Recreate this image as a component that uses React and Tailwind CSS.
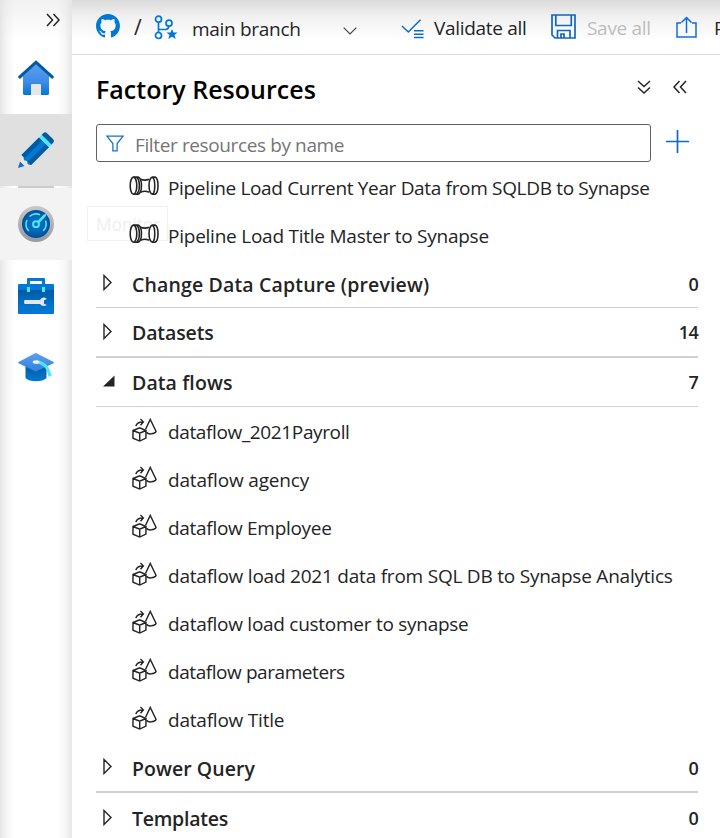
import React from "react";

function Home() {
  return (
    <svg width="36" height="36" viewBox="0 0 36 36">
      <defs>
        <linearGradient id="house" x1="0" y1="0" x2="0" y2="1">
          <stop offset="0" stopColor="#5ea0ef" />
          <stop offset="0.6" stopColor="#3c8be6" />
          <stop offset="1" stopColor="#0078d4" />
        </linearGradient>
      </defs>
      <path d="M18 3.5 5 16v17.5a1.5 1.5 0 0 0 1.500 1.500h23a1.500 1.500 0 0 0 1.500-1.500V16Z" fill="url(#house)" />
      <path d="M14 24h8a1 1 0 0 1 1 1v10H13V25a1 1 0 0 1 1-1Z" fill="#e6e6e6" />
      <path d="M18 0.300 0.300 16.300a1 1 0 0 0 0 1.200l1 .9a1 1 0 0 0 1.200 0L18 4.300l15.500 14.100a1 1 0 0 0 1.200 0l1-.9a1 1 0 0 0 0-1.200Z" fill="#005ba1" />
    </svg>
  );
}

function Pencil() {
  return (
    <svg width="36" height="36" viewBox="0 0 36 36">
      <path d="M0 36 3.500 23 13 33Z" fill="#e6e6e6" />
      <path d="M0 36 2 29.500 6.500 34Z" fill="#0f6fc6" />
      <path d="M3.500 23 21 5.500 31 15 13 33 9.700 32.300 9 29 6 28.300 5.500 24.500Z" fill="#0078d4" />
      <path d="M3.500 23 21 5.500l3.200 3L6.500 26Z" fill="#005ba1" />
      <path d="M9.800 29.800 27.800 12 31 15 13 33Z" fill="#005ba1" />
      <path d="m21 5.500 2.700-2.700L34 12.300 31 15.300Z" fill="#50e6ff" />
      <path d="m23.700 2.800 1.800-1.800Q27-.3 28.500.8L35 7q1.600 1.500.4 3.500L33.500 12.600Z" fill="#005ba1" />
    </svg>
  );
}

function Gauge() {
  return (
    <svg width="36" height="36" viewBox="0 0 36 36">
      <defs>
        <radialGradient id="dial">
          <stop offset="0" stopColor="#0078d4" />
          <stop offset="0.5" stopColor="#0669bc" />
          <stop offset="1" stopColor="#005099" />
        </radialGradient>
        <linearGradient id="rim" x1="0" y1="0" x2="0" y2="1">
          <stop offset="0" stopColor="#c9c9cc" />
          <stop offset="1" stopColor="#99999c" />
        </linearGradient>
      </defs>
      <circle cx="18" cy="18" r="18" fill="url(#rim)" />
      <circle cx="18" cy="18" r="14" fill="url(#dial)" />
      <g fill="none" stroke="#50e6ff" strokeWidth="1.600">
        <path d="M10.800 25A10 10 0 0 1 9 14" />
        <path d="M11.500 10.500A10 10 0 0 1 22 8.800" />
        <path d="M27.500 14.500A10 10 0 0 1 25.200 25" />
        <circle cx="18" cy="18.200" r="2.900" strokeWidth="2" />
      </g>
      <path d="m19.300 15.300 6.500-6.800 2-.5.500 1.800-7 7.200Z" fill="#50e6ff" />
    </svg>
  );
}

function Toolbox() {
  return (
    <svg width="36" height="36" viewBox="0 0 36 36">
      <defs>
        <linearGradient id="box" x1="0" y1="0" x2="0" y2="1">
          <stop offset="0" stopColor="#005ba1" />
          <stop offset="0.700" stopColor="#0074d0" />
          <stop offset="1" stopColor="#0078d4" />
        </linearGradient>
      </defs>
      <path d="M9 6V1q0-1 1-1h16q1 0 1 1v5h-3V3H12v3Z" fill="#0078d4" />
      <path d="M0 7q0-1 1-1h34q1 0 1 1v6H0Z" fill="#0078d4" />
      <path d="M0 12h36v23q0 1-1 1H1q-1 0-1-1Z" fill="url(#box)" />
      <path d="M9 9h3v5H9zM24 9h3v5h-3z" fill="#50e6ff" />
      <path d="M6.500 22H22q1.500-3 4.500-2.400L29 21l-3 1.200v3.600L29 27q-4.500 2.300-7-1H6.500q-1-2 0-4Z" fill="#e6e6e6" />
    </svg>
  );
}

function Cap() {
  return (
    <svg width="36" height="30" viewBox="0 0 36 30">
      <defs>
        <linearGradient id="board" x1="0" y1="0" x2="0" y2="1">
          <stop offset="0" stopColor="#5ea0ef" />
          <stop offset="1" stopColor="#2f80dc" />
        </linearGradient>
        <linearGradient id="base" x1="0" y1="0" x2="0" y2="1">
          <stop offset="0" stopColor="#005ba1" />
          <stop offset="1" stopColor="#0078d4" />
        </linearGradient>
      </defs>
      <path d="M7.500 11h21v14c-4 4.300-17 4.300-21 0Z" fill="url(#base)" />
      <path d="M17 .2.500 9q-.8.600 0 1.200L17 18.300q.8.400 1.600 0l17-8.100q.8-.6 0-1.200L18.600.2q-.8-.4-1.600 0Z" fill="url(#board)" />
      <path d="M18 8.500q12 2 13.500 13.500l1.800-.4" fill="none" stroke="#50e6ff" strokeWidth="3" />
      <ellipse cx="18" cy="9" rx="3.300" ry="1.800" fill="#f2f2f2" />
    </svg>
  );
}

function Chevrons({ className }) {
  return (
    <svg width="14" height="14" viewBox="0 0 14 14" className={className} fill="none" stroke="#242424" strokeWidth="1.500">
      <path d="M1 1 6.500 7 1 13M7.500 1 13 7 7.500 13" />
    </svg>
  );
}

function GitHub() {
  return (
    <svg width="24" height="24" viewBox="0 0 16 16" fill="#0078d4" className="mb-0.5 shrink-0">
      <path d="M8 0C3.580 0 0 3.580 0 8c0 3.540 2.290 6.530 5.470 7.590.4.070.55-.17.55-.38 0-.19-.01-.82-.01-1.490-2.010.37-2.530-.49-2.690-.94-.09-.23-.48-.94-.82-1.130-.28-.15-.68-.52-.01-.53.63-.01 1.080.58 1.230.82.72 1.210 1.870.87 2.330.66.07-.52.28-.87.510-1.070-1.780-.2-3.640-.89-3.640-3.950 0-.87.310-1.590.82-2.150-.08-.2-.36-1.020.08-2.120 0 0 .67-.21 2.200.82.64-.18 1.320-.27 2-.27s1.360.09 2 .27c1.530-1.040 2.200-.82 2.200-.82.44 1.100.16 1.920.08 2.120.51.56.82 1.270.82 2.150 0 3.070-1.870 3.750-3.650 3.950.29.25.54.73.54 1.480 0 1.070-.01 1.930-.01 2.200 0 .21.150.46.55.38A8.010 8.010 0 0 0 16 8c0-4.420-3.580-8-8-8Z" />
    </svg>
  );
}

function Branch() {
  return (
    <svg width="24" height="25" viewBox="0 0 24 25" className="shrink-0">
      <g fill="none" stroke="#0078d4" strokeWidth="1.700">
        <circle cx="4.500" cy="4.200" r="3" />
        <circle cx="15" cy="8.200" r="3" />
        <circle cx="4.500" cy="20.500" r="3" />
        <path d="M4.500 7.200v10.300M4.500 14.500h7q3 0 3.400-3.300" />
      </g>
      <path d="m18 14 1.500 3.600h4l-3 2.500 1.200 4-3.700-2.400-3.700 2.400 1.200-4-3-2.500h4Z" fill="#0078d4" />
    </svg>
  );
}

function Validate() {
  return (
    <svg width="24" height="20" viewBox="0 0 24 20" fill="none" stroke="#0f6cbd" strokeWidth="1.500">
      <path d="m1 7 6.300 6L19.500.8" />
      <path d="M13 11.800h9.500M13 15.200h9.500M13 18.500h9.500" />
    </svg>
  );
}

function Save() {
  return (
    <svg width="25" height="25" viewBox="0 0 25 25" fill="none" stroke="#1267b8" strokeWidth="1.700">
      <path d="M1 1h23v23H4l-3-3ZM4.800 1v10.500h15.500V1M6.500 24v-7.500H19V24M10 24v-4h3v4" />
    </svg>
  );
}

function Publish() {
  return (
    <svg width="21" height="22" viewBox="0 0 21 22" fill="none" stroke="#0f6cde" strokeWidth="1.500">
      <path d="M5 7H1v14h19V7h-4M10.500 17V1.500M5.500 6.500l5-5 5 5" />
    </svg>
  );
}

function Pipe() {
  return (
    <svg width="30" height="20" viewBox="0 0 30 20" className="relative shrink-0" fill="none" stroke="#242424" strokeWidth="1.600">
      <ellipse cx="4.500" cy="9.700" rx="3.300" ry="8.600" />
      <path d="M4.500 1.100H9c4.600 1.500 4.600 15.700 0 17.200H4.500M7.500 1.300c3.800 2.500 3.800 14.300 0 16.800" />
      <path d="M11.500 3.300Q16 5 20 3.300M11.500 16.200Q16 14.400 20 16.200" />
      <path d="M23.500 1.100c-4.600 1.500-4.600 15.700 0 17.200H26c4-1.500 4-15.700 0-17.200ZM23.500 1.100c3 2 3 15.200 0 17.200" />
    </svg>
  );
}

function Flow() {
  return (
    <svg width="25" height="24" viewBox="0 0 26 25" className="shrink-0" fill="none" stroke="#242424" strokeWidth="1.500">
      <path d="m1 13 7-2.700 6.500 2.700v8L8 24l-7-3ZM1 13l7 2.900 6.500-2.900M8 15.900V24" />
      <path d="M14.500 14.500Q17 17 20 16.500q4.500-.5 5-2.700L19 1.500 14 12" />
      <path d="M4 8.500Q5 4 11.500 4.200M8.800.9l3 3.300-3 3.400" />
    </svg>
  );
}

function Arrow({ open }) {
  return open ? (
    <svg width="12" height="12" viewBox="0 0 12 12" className="ml-[7px] mr-[17px]">
      <path d="M0 11.500 11.500.5v11Z" fill="#242424" />
    </svg>
  ) : (
    <svg width="10" height="17" viewBox="0 0 10 17" className="ml-[7px] mr-[19px]">
      <path d="M1 1.500v14l7-7Z" fill="none" stroke="#242424" strokeWidth="1.400" />
    </svg>
  );
}

function Section({ label, count, open, line, track }) {
  return (
    <div className={`flex shrink-0 items-center border-[#d0d0d0] pt-0.5 font-semibold ${line}`}>
      <div className="pb-1"><Arrow open={open} /></div>
      <span className={`grow text-[19.5px] ${track}`}>{label}</span>
      <span className="pb-0.5 text-[18px] tracking-[-0.7px]">{count}</span>
    </div>
  );
}

function Item({ label, pipe, track }) {
  return (
    <div className={`flex h-12 shrink-0 items-center ${pipe ? "pl-[33px]" : "pl-9"}`}>
      <div className="w-9 shrink-0 pb-1">{pipe ? <Pipe /> : <Flow />}</div>
      <span className={`relative ${pipe ? "ml-[3px]" : ""} ${track}`}>{label}</span>
    </div>
  );
}

export default function App() {
  return (
    <div className="flex h-[838px] w-[720px] overflow-hidden bg-white font-['Open_Sans',sans-serif] text-[19px] leading-6 whitespace-nowrap text-[#242424]">
      <nav className="flex w-[72px] shrink-0 flex-col bg-[linear-gradient(90deg,#e6e6e6_0,#f5f5f5_6px,#fff_15px,#fff_56px,#f7f7f7_65px,#e6e6e6_72px)]">
        <div className="flex h-[114px] flex-col items-center bg-gradient-to-b from-[#e3e3e380] to-transparent to-35%">
          <Chevrons className="mt-[13px] ml-[34px]" />
          <div className="mt-[33px]"><Home /></div>
        </div>
        <div className="flex h-[72px] items-center justify-center bg-[#e0e0e0]"><Pencil /></div>
        <div className="mx-auto h-0.5 w-9 bg-[#ccc]" />
        <div className="flex h-[72px] items-center justify-center bg-[#f3f3f3]"><Gauge /></div>
        <div className="flex h-[72px] items-center justify-center"><Toolbox /></div>
        <div className="flex h-[72px] items-center justify-center"><Cap /></div>
      </nav>

      <main className="flex min-w-0 grow flex-col">
        <header className="flex h-[55px] shrink-0 items-center overflow-hidden border-b border-[#dcdcdc] bg-[linear-gradient(#dadada,#f0f0f0_16px,#fff_40px)] pl-6">
          <GitHub />
          <span className="ml-[14px] w-[20px] shrink-0 text-[21px]">/</span>
          <Branch />
          <span className="mt-1 ml-[14px] w-[151px] shrink-0 tracking-[-0.3px]">main branch</span>
          <svg width="14" height="8" viewBox="0 0 14 8" className="mt-2 shrink-0" fill="none" stroke="#444" strokeWidth="1.200"><path d="m.7.700 6.300 6.300L13.300.7" /></svg>
          <div className="mt-1 ml-11 shrink-0"><Validate /></div>
          <span className="mt-0.5 ml-[9px] w-[117px] shrink-0 tracking-[-0.3px]">Validate all</span>
          <div className="mb-0.5 shrink-0"><Save /></div>
          <span className="mt-0.5 ml-[11px] w-[89px] shrink-0 tracking-[-0.3px] text-[#bdbdbd]">Save all</span>
          <div className="shrink-0"><Publish /></div>
          <span className="mt-0.5 ml-[17px]">Publish</span>
        </header>

        <div className="flex h-[69px] shrink-0 items-center pl-6">
          <h1 className="grow pb-0.5 text-[25px] font-semibold tracking-[0.02px] text-black">Factory Resources</h1>
          <Chevrons className="mb-1.5 rotate-90" />
          <Chevrons className="mr-[33px] mb-1.5 ml-[22px] rotate-180" />
        </div>

        <div className="flex h-10 shrink-0 pl-6">
          <div className="flex h-[38px] w-[555px] items-center rounded-[3px] border border-[#616161] pl-[9px]">
            <svg width="18" height="17" viewBox="0 0 17 16" fill="none" stroke="#1570c8" strokeWidth="1.200"><path d="M.8 1h15.400L10.500 8v7h-4V8Z" /></svg>
            <span className="mt-1 ml-[11px] tracking-[-0.38px] text-[#757575]">Filter resources by name</span>
          </div>
          <svg width="23" height="23" viewBox="0 0 23 23" className="mt-[6px] ml-[15px]" stroke="#0f6cbd" strokeWidth="1.700"><path d="M0 11.500h23M11.500 0v23" /></svg>
        </div>

        <div className="relative flex shrink-0 flex-col pr-[22px] pl-6">
          <div className="absolute top-[42px] left-[15px] flex h-[35px] w-[81px] items-center border border-[#f0f0f0] pl-2 text-[17.5px] tracking-[-0.2px] text-[#efefef]">Monitor</div>
          <Item pipe label="Pipeline Load Current Year Data from SQLDB to Synapse" track="tracking-[-0.33px]" />
          <Item pipe label="Pipeline Load Title Master to Synapse" track="tracking-[-0.24px]" />
          <Section label="Change Data Capture (preview)" count="0" line="h-12 border-b" track="tracking-[0.15px]" />
          <Section label="Datasets" count="14" line="h-[50px] border-b-2" track="tracking-[-0.12px]" />
          <Section label="Data flows" count="7" open line="h-[49px] border-b" track="tracking-[0.1px]" />
          <div className="flex flex-col pt-px">
            <Item label="dataflow_2021Payroll" track="tracking-[-0.37px]" />
            <Item label="dataflow agency" track="tracking-[-0.17px]" />
            <Item label="dataflow Employee" track="tracking-[-0.3px]" />
            <Item label="dataflow load 2021 data from SQL DB to Synapse Analytics" track="tracking-[-0.22px]" />
            <Item label="dataflow load customer to synapse" track="tracking-[-0.27px]" />
            <Item label="dataflow parameters" track="tracking-[-0.43px]" />
            <Item label="dataflow Title" track="tracking-[-0.22px]" />
          </div>
          <Section label="Power Query" count="0" line="h-[49px] border-b-2" track="tracking-[0.05px]" />
          <Section label="Templates" count="0" line="h-[50px]" track="tracking-[-0.25px]" />
        </div>
      </main>
    </div>
  );
}
